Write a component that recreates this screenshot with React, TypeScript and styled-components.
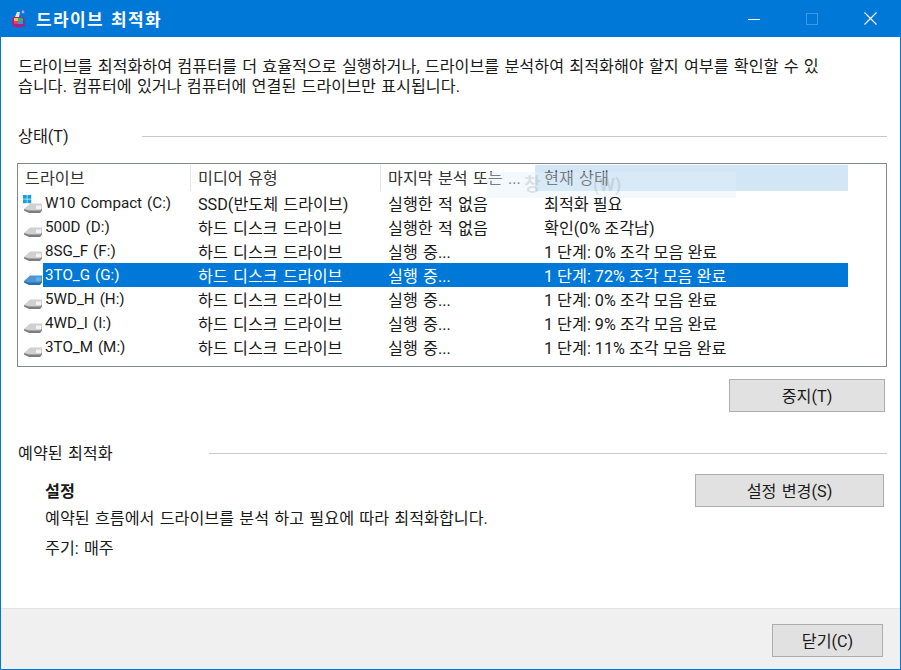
import styled, { createGlobalStyle } from "styled-components";

const GlobalStyle = createGlobalStyle`
  html, body {
    margin: 0;
    padding: 0;
    background: #fff;
  }
  * {
    box-sizing: border-box;
  }
`;

const Window = styled.div`
  width: 901px;
  height: 670px;
  display: flex;
  flex-direction: column;
  border: 1px solid #0078d7;
  border-top: none;
  font-family: Roboto, "Noto Sans CJK KR", sans-serif;
  font-size: 16.2px;
  word-spacing: 1.2px;
  color: #1a1a1a;
  background: #fff;
`;

const TitleBar = styled.div`
  height: 37px;
  margin: 0 -1px;
  flex: none;
  display: flex;
  align-items: center;
  padding-left: 10px;
  background: #0078d7;
  color: #fff;
`;

const TitleText = styled.div`
  margin-left: 8px;
  font-size: 17px;
  font-weight: 700;
  letter-spacing: 1.4px;
`;

const Controls = styled.div`
  margin-left: auto;
  padding-right: 2px;
  display: flex;
  height: 100%;
`;

const ControlButton = styled.div`
  width: 58px;
  height: 100%;
  display: flex;
  align-items: center;
  justify-content: center;
`;

const Body = styled.div`
  flex: 1;
  display: flex;
  flex-direction: column;
  padding: 20px 13px 0 17px;
`;

const Intro = styled.p`
  margin: 0;
  width: 850px;
  line-height: 20px;
  height: 40px;
  white-space: nowrap;
`;

const Section = styled.div<{ $lineGap: number }>`
  display: flex;
  align-items: center;
  gap: ${(p) => p.$lineGap}px;
  height: 20px;
  padding-bottom: 2px;
  &::after {
    content: "";
    flex: 1;
    height: 1px;
    margin-top: 2px;
    background: #c8c8c8;
  }
`;

const StatusSection = styled(Section)`
  margin-top: 29px;
`;

const ListBox = styled.div`
  position: relative;
  margin: 17px 0 0 -1px;
  width: 870px;
  height: 204px;
  border: 1px solid #828790;
  padding-top: 1px;
`;

const HeaderRow = styled.div`
  display: grid;
  grid-template-columns: 173px 190px 155px 312px;
  height: 26px;
  width: 830px;
`;

const HeaderCell = styled.div<{ $hot?: boolean }>`
  display: flex;
  align-items: center;
  padding: 0 0 2px ${(p) => (p.$hot ? 8 : 7)}px;
  white-space: nowrap;
  color: #333;
  background: ${(p) => (p.$hot ? "#d3e6f6" : "transparent")};
  border-right: ${(p) => (p.$hot ? "none" : "1px solid #e5e5e5")};
`;

const GhostHeader = styled.div`
  position: absolute;
  left: 469px;
  top: 8px;
  width: 249px;
  height: 26px;
  padding-left: 37px;
  line-height: 26px;
  background: rgba(226, 239, 249, 0.4);
  color: rgba(120, 120, 120, 0.2);
  font-size: 18px;
  font-weight: 700;
  word-spacing: 48px;
  white-space: nowrap;
`;

const Row = styled.div<{ $selected?: boolean }>`
  position: relative;
  display: grid;
  grid-template-columns: 148px 190px 156px 311px;
  height: 24px;
  width: 830px;
  padding-left: 25px;
  align-items: center;
  background-color: ${(p) => (p.$selected ? "#0078d7" : "transparent")};
  background-clip: content-box;
  color: ${(p) => (p.$selected ? "#fff" : "inherit")};
`;

const Cell = styled.div`
  padding: 0 0 2px 7px;
  white-space: nowrap;
`;

const DriveName = styled(Cell)`
  padding-left: 2px;
  font-size: 15.2px;
`;

const StatusCell = styled(Cell)`
  word-spacing: 0;
`;

const DriveIconHolder = styled.span`
  position: absolute;
  left: 5px;
  top: 2px;
  display: flex;
`;

const ActionRow = styled.div`
  display: flex;
  justify-content: flex-end;
  margin-top: 12px;
  width: 867px;
`;

const PushButton = styled.div<{ $width: number }>`
  width: ${(p) => p.$width}px;
  height: 33px;
  padding-bottom: 2px;
  display: flex;
  align-items: center;
  justify-content: center;
  background: #e1e1e1;
  border: 1px solid #adadad;
  color: #1a1a1a;
`;

const ScheduleSection = styled(Section)`
  margin-top: 31px;
`;

const ScheduleArea = styled.div`
  display: grid;
  grid-template-columns: 1fr 189px;
  padding: 11px 3px 0 27px;
`;

const ScheduleText = styled.div`
  display: flex;
  flex-direction: column;
`;

const SettingTitle = styled.div`
  font-weight: 700;
  line-height: 24px;
  margin-top: 6px;
`;

const SettingLine = styled.div<{ $gap: number }>`
  line-height: 24px;
  margin-top: ${(p) => p.$gap}px;
`;

const Footer = styled.div`
  height: 61px;
  flex: none;
  display: flex;
  align-items: flex-start;
  justify-content: flex-end;
  padding: 15px 17px 0 0;
  background: #f0f0f0;
  border-top: 1px solid #e3e3e3;
`;

const AppIcon = () => (
  <svg width="18" height="20" viewBox="0 0 18 20">
    <path d="M2 8h12l1 9-6 2-7-2z" fill="#a3248c" />
    <rect x="4" y="9" width="4" height="3" fill="#e8c23a" />
    <rect x="8" y="9" width="5" height="3" fill="#2fb56a" />
    <rect x="4" y="12" width="4" height="3" fill="#e2415a" />
    <rect x="8" y="12" width="5" height="3" fill="#3c8fd9" />
    <path d="M5 8 7 3h3L9 8z" fill="#e7e2ea" />
    <circle cx="13" cy="3" r="1.4" fill="#d79be0" />
  </svg>
);

const MinimizeIcon = () => (
  <svg width="12" height="10" viewBox="0 0 12 10">
    <path d="M0 5.5h12" stroke="#fff" strokeWidth="1" />
  </svg>
);

const MaximizeIcon = () => (
  <svg width="12" height="12" viewBox="0 0 12 12">
    <rect x="0.5" y="0.5" width="11" height="11" fill="none" stroke="#3a9ae8" />
  </svg>
);

const CloseIcon = () => (
  <svg width="13" height="13" viewBox="0 0 13 13">
    <path d="M0.5 0.5 12.5 12.5M12.5 0.5 0.5 12.5" stroke="#fff" strokeWidth="1.1" />
  </svg>
);

const DriveIcon = ({ selected, windows }: { selected?: boolean; windows?: boolean }) => (
  <svg width="20" height="22" viewBox="0 0 20 22">
    <path d="M1 16 7 10.5h12V16l-2 3H6z" fill={selected ? "#4a97d4" : "#d0d0d0"} />
    <path d="M1 16 6 17.5h11l2-1.5v1.5L17 20H6l-5-2.5z" fill={selected ? "#2a70aa" : "#7c7c7c"} />
    <path d="M13 12.5h5v3.5h-5z" fill={selected ? "#62aee6" : "#f2f2f2"} />
    {windows && (
      <g fill="#14a0e6">
        <rect x="0" y="2" width="3.8" height="3.8" />
        <rect x="4.4" y="2" width="3.8" height="3.8" />
        <rect x="0" y="6.4" width="3.8" height="3.8" />
        <rect x="4.4" y="6.4" width="3.8" height="3.8" />
      </g>
    )}
  </svg>
);

interface Drive {
  name: string;
  media: string;
  last: string;
  status: string;
  windows?: boolean;
  selected?: boolean;
}

const HDD = "하드 디스크 드라이브";

const drives: Drive[] = [
  { name: "W10 Compact (C:)", media: "SSD(반도체 드라이브)", last: "실행한 적 없음", status: "최적화 필요", windows: true },
  { name: "500D (D:)", media: HDD, last: "실행한 적 없음", status: "확인(0% 조각남)" },
  { name: "8SG_F (F:)", media: HDD, last: "실행 중...", status: "1 단계: 0% 조각 모음 완료" },
  { name: "3TO_G (G:)", media: HDD, last: "실행 중...", status: "1 단계: 72% 조각 모음 완료", selected: true },
  { name: "5WD_H (H:)", media: HDD, last: "실행 중...", status: "1 단계: 0% 조각 모음 완료" },
  { name: "4WD_I (I:)", media: HDD, last: "실행 중...", status: "1 단계: 9% 조각 모음 완료" },
  { name: "3TO_M (M:)", media: HDD, last: "실행 중...", status: "1 단계: 11% 조각 모음 완료" },
];

const App = () => (
  <>
    <GlobalStyle />
    <Window>
      <TitleBar>
        <AppIcon />
        <TitleText>드라이브 최적화</TitleText>
        <Controls>
          <ControlButton>
            <MinimizeIcon />
          </ControlButton>
          <ControlButton>
            <MaximizeIcon />
          </ControlButton>
          <ControlButton>
            <CloseIcon />
          </ControlButton>
        </Controls>
      </TitleBar>

      <Body>
        <Intro>
          드라이브를 최적화하여 컴퓨터를 더 효율적으로 실행하거나, 드라이브를 분석하여 최적화해야 할지 여부를 확인할 수 있
          <br />
          습니다. 컴퓨터에 있거나 컴퓨터에 연결된 드라이브만 표시됩니다.
        </Intro>

        <StatusSection $lineGap={73}>상태(T)</StatusSection>

        <ListBox>
          <HeaderRow>
            <HeaderCell>드라이브</HeaderCell>
            <HeaderCell>미디어 유형</HeaderCell>
            <HeaderCell>마지막 분석 또는 ...</HeaderCell>
            <HeaderCell $hot>현재 상태</HeaderCell>
          </HeaderRow>
          <GhostHeader>창 (W)</GhostHeader>
          {drives.map((d) => (
            <Row key={d.name} $selected={d.selected}>
              <DriveIconHolder>
                <DriveIcon selected={d.selected} windows={d.windows} />
              </DriveIconHolder>
              <DriveName>{d.name}</DriveName>
              <Cell>{d.media}</Cell>
              <Cell>{d.last}</Cell>
              <StatusCell>{d.status}</StatusCell>
            </Row>
          ))}
        </ListBox>

        <ActionRow>
          <PushButton $width={156}>중지(T)</PushButton>
        </ActionRow>

        <ScheduleSection $lineGap={96}>예약된 최적화</ScheduleSection>

        <ScheduleArea>
          <ScheduleText>
            <SettingTitle>설정</SettingTitle>
            <SettingLine $gap={3}>예약된 흐름에서 드라이브를 분석 하고 필요에 따라 최적화합니다.</SettingLine>
            <SettingLine $gap={6}>주기: 매주</SettingLine>
          </ScheduleText>
          <PushButton $width={189}>설정 변경(S)</PushButton>
        </ScheduleArea>
      </Body>

      <Footer>
        <PushButton $width={111}>닫기(C)</PushButton>
      </Footer>
    </Window>
  </>
);

export default App;
